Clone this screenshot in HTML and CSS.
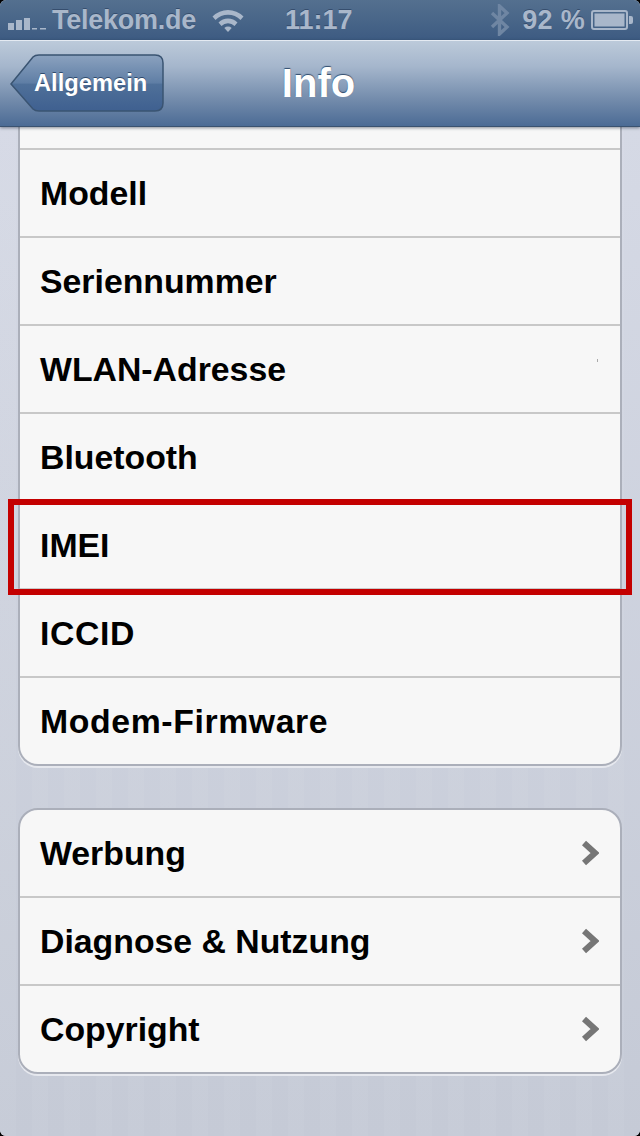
FILE: index.html
```html
<!DOCTYPE html>
<html lang="en">
<head>
    <meta charset="UTF-8">
    <meta name="viewport" content="width=device-width, initial-scale=1.0">
    <title>Info</title>
    <link rel="stylesheet" href="styles.css">
</head>
<body>

<div class="screen">

    <!-- Status bar -->
    <div class="status-bar">
        <div class="status-left">
            <svg class="signal" width="38" height="12" viewBox="0 0 38 12">
                <rect x="0" y="5" width="6" height="7"/>
                <rect x="8" y="2" width="6" height="10"/>
                <rect x="16" y="0" width="6" height="12"/>
                <rect x="24" y="10" width="5" height="1.5"/>
                <rect x="32" y="10" width="6" height="1.5"/>
            </svg>
            <span class="carrier">Telekom.de</span>
            <svg class="wifi" width="32" height="24" viewBox="0 0 32 24">
                <path d="M0.5 8.5 A22 22 0 0 1 31.5 8.5 L28.5 12 A17.5 17.5 0 0 0 3.5 12 Z"/>
                <path d="M6.5 14.5 A13.5 13.5 0 0 1 25.5 14.5 L22.5 18 A9 9 0 0 0 9.5 18 Z"/>
                <path d="M12.3 20 A5.5 5.5 0 0 1 19.7 20 L16 24 Z"/>
            </svg>
        </div>
        <span class="clock">11:17</span>
        <div class="status-right">
            <svg class="bt" width="20" height="32" viewBox="0 0 20 32">
                <path d="M2 9 L17 23 L9.5 30 V2 L17 9 L2 23" fill="none" stroke-width="3.4"/>
            </svg>
            <span class="percent">92 %</span>
            <svg class="battery" width="42" height="20" viewBox="0 0 42 20">
                <rect x="1" y="1" width="35" height="18" rx="2" fill="none" stroke-width="2"/>
                <rect x="4" y="4" width="29" height="12"/>
                <path class="nub" d="M38 6 h2 a2 2 0 0 1 2 2 v4 a2 2 0 0 1 -2 2 h-2 Z"/>
            </svg>
        </div>
    </div>

    <!-- Nav bar -->
    <div class="nav-bar">
        <div class="back-btn">
            <svg class="back-shape" width="156" height="60" viewBox="0 0 156 60">
                <defs>
                    <linearGradient id="backFill" x1="0" y1="0" x2="0" y2="1">
                        <stop offset="0" stop-color="#8ba2bf"/>
                        <stop offset="0.5" stop-color="#5f7ea5"/>
                        <stop offset="0.52" stop-color="#4f7099"/>
                        <stop offset="1" stop-color="#3f6090"/>
                    </linearGradient>
                </defs>
                <path d="M1 30 L23 3 Q25 1 29 1 H145 Q153 1 153 9 V49 Q153 57 145 57 H29 Q25 57 23 55 Z" fill="url(#backFill)" stroke="#3a5472" stroke-width="1.5"/>
            </svg>
            <span class="back-label">Allgemein</span>
        </div>
        <h1 class="nav-title">Info</h1>
    </div>

    <!-- Settings list -->
    <div class="content">
        <div class="group group-cut">
            <div class="row row-cut"></div>
            <div class="row">Modell</div>
            <div class="row">Seriennummer</div>
            <div class="row row-speck">WLAN-Adresse<i class="speck"></i></div>
            <div class="row">Bluetooth</div>
            <div class="row">IMEI</div>
            <div class="row row-wide">ICCID</div>
            <div class="row row-wide">Modem-Firmware</div>
        </div>

        <div class="group">
            <div class="row">Werbung
                <svg class="chevron" width="18" height="26" viewBox="0 0 18 26"><path d="M3 3 L14 13 L3 23" fill="none"/></svg>
            </div>
            <div class="row">Diagnose &amp; Nutzung
                <svg class="chevron" width="18" height="26" viewBox="0 0 18 26"><path d="M3 3 L14 13 L3 23" fill="none"/></svg>
            </div>
            <div class="row">Copyright
                <svg class="chevron" width="18" height="26" viewBox="0 0 18 26"><path d="M3 3 L14 13 L3 23" fill="none"/></svg>
            </div>
        </div>

        <!-- Red annotation box -->
        <div class="highlight"></div>
    </div>

</div>

</body>
</html>
```

FILE: styles.css
```css
html, body {
    margin: 0;
    padding: 0;
    background-color: #000;
}
.screen {
    width: 640px;
    height: 1136px;
    overflow: hidden;
    border-radius: 6px;
    font-family: "Liberation Sans", Arial, sans-serif;
    background-color: #ccd1dd;
}

/* Status bar */
.status-bar {
    height: 40px;
    display: flex;
    align-items: center;
    justify-content: space-between;
    padding: 0 7px 0 8px;
    box-sizing: border-box;
    position: relative;
    background: linear-gradient(#54708f, #3d5b82);
    color: #a9b7ca;
    font-size: 27px;
    font-weight: bold;
    text-shadow: 0 -1px 0 rgba(30, 50, 80, 0.5);
}
.status-left {
    display: flex;
    align-items: center;
}
.signal {
    fill: #a9b7ca;
    margin-right: 6px;
    margin-top: 8px;
}
.carrier {
    letter-spacing: -0.25px;
}
.wifi {
    fill: #a9b7ca;
    margin-left: 16px;
}
.clock {
    position: absolute;
    left: 285px;
    top: 5px;
}
.status-right {
    display: flex;
    align-items: center;
}
.bt {
    stroke: #6f86a3;
    margin-right: 12px;
}
.percent {
    margin-right: 6px;
    letter-spacing: 0.3px;
}
.battery {
    stroke: #a9b7ca;
    fill: #a9b7ca;
}
.battery .nub {
    stroke: none;
}

/* Nav bar */
.nav-bar {
    height: 87px;
    position: relative;
    display: flex;
    align-items: center;
    justify-content: center;
    box-sizing: border-box;
    border-top: 1px solid #e4eaf2;
    border-bottom: 1px solid #3a5270;
    background: linear-gradient(#bccada, #a5b6cc 30%, #6f88a9 72%, #4b6b95);
    box-shadow: 0 1px 3px rgba(30, 40, 60, 0.5);
    z-index: 2;
}
.back-btn {
    position: absolute;
    left: 10px;
    top: 13px;
    width: 156px;
    height: 60px;
    display: flex;
    align-items: center;
}
.back-shape {
    position: absolute;
    left: 0;
    top: 0;
}
.back-label {
    position: relative;
    margin-left: 24px;
    margin-top: -2px;
    color: #fff;
    font-size: 23.7px;
    font-weight: bold;
    text-shadow: 0 -1px 0 #2f4a6c;
}
.nav-title {
    margin: 0 0 0 -3px;
    color: #fff;
    font-size: 40px;
    font-weight: bold;
    text-shadow: 0 -1px 1px #2f4a6c;
}

/* List */
.content {
    height: 1009px;
    position: relative;
    overflow: hidden;
    padding: 0 18px;
    box-sizing: border-box;
    background-image:
        repeating-linear-gradient(90deg, rgba(255, 255, 255, 0.04) 0, rgba(255, 255, 255, 0.04) 16px, rgba(0, 0, 0, 0) 16px, rgba(0, 0, 0, 0) 32px),
        linear-gradient(#d5d9e5, #c5cad6);
}
.group {
    background-color: #f7f7f7;
    border: 2px solid #abafba;
    border-radius: 20px;
    box-shadow: 0 2px 0 #e6e8ee;
    overflow: hidden;
    margin-bottom: 42px;
}
.group-cut {
    border-top: none;
    border-radius: 0 0 20px 20px;
}
.row {
    height: 88px;
    box-sizing: border-box;
    display: flex;
    align-items: center;
    justify-content: space-between;
    padding: 0 21px 0 20px;
    border-top: 2px solid #c8c8c8;
    color: #000;
    font-size: 33.8px;
    font-weight: bold;
}
.row-wide {
    letter-spacing: 0.6px;
}
.group .row:first-child {
    border-top: none;
    height: 86px;
}
.group .row-cut:first-child {
    height: 21px;
}
.row-speck {
    position: relative;
}
.speck {
    position: absolute;
    left: 577px;
    top: 33px;
    width: 1px;
    height: 3px;
    background-color: #aaa;
}
.chevron {
    stroke: #767676;
    stroke-width: 6;
}

/* Annotation */
.highlight {
    position: absolute;
    left: 8px;
    top: 372px;
    width: 624px;
    height: 96px;
    box-sizing: border-box;
    border: 6px solid #c40000;
}
```
